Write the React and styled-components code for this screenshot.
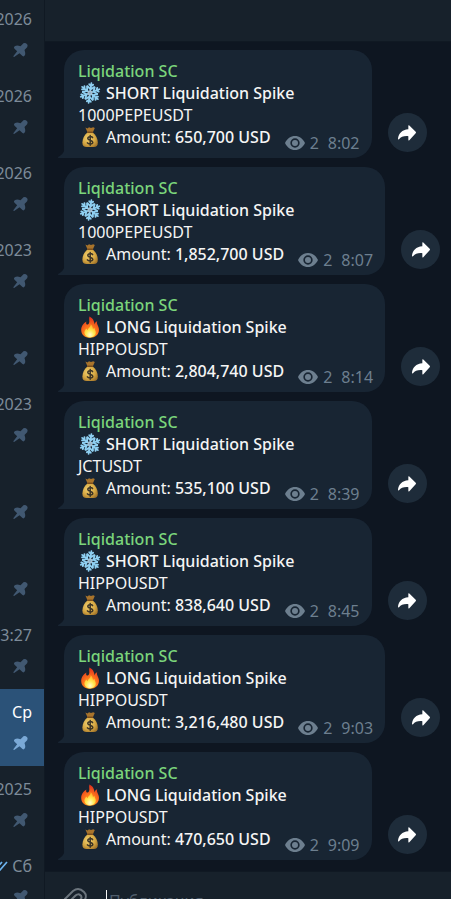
import React from "react";
import styled, { createGlobalStyle } from "styled-components";

const chats = [
  { id: 1, date: "2026" },
  { id: 2, date: "2026" },
  { id: 3, date: "2026" },
  { id: 4, date: "2023" },
  { id: 5, date: "" },
  { id: 6, date: "2023" },
  { id: 7, date: "" },
  { id: 8, date: "" },
  { id: 9, date: "3:27" },
  { id: 10, date: "Ср", active: true },
  { id: 11, date: "2025" },
  { id: 12, date: "Сб", read: true },
];

const messages = [
  { type: "SHORT", coin: "1000PEPEUSDT", amount: "650,700", time: "8:02" },
  { type: "SHORT", coin: "1000PEPEUSDT", amount: "1,852,700", time: "8:07" },
  { type: "LONG", coin: "HIPPOUSDT", amount: "2,804,740", time: "8:14" },
  { type: "SHORT", coin: "JCTUSDT", amount: "535,100", time: "8:39" },
  { type: "SHORT", coin: "HIPPOUSDT", amount: "838,640", time: "8:45" },
  { type: "LONG", coin: "HIPPOUSDT", amount: "3,216,480", time: "9:03" },
  { type: "LONG", coin: "HIPPOUSDT", amount: "470,650", time: "9:09" },
];

/// icons ///
const PinIcon = () => (
  <svg width="15" height="14" viewBox="0 0 44 42" fill="currentColor">
    <path d="M28 4Q30 0 35 0Q38 0 41 3Q44 6 43 9Q43 13 39 16L34 21Q38 32 35 37Q32 42 28 39L19 31L4 41Q0 43 1 39L12 25L4 17Q0 12 6 9Q12 6 22 10Z" />
  </svg>
);

const ChecksIcon = () => (
  <svg width="18" height="10" viewBox="0 0 18 10" fill="none">
    <path
      d="M1 5L5 9L12 1M8 7L10 9L17 1"
      stroke="#6cb4f0"
      strokeWidth="1.7"
    />
  </svg>
);

const EyeIcon = () => (
  <svg width="20" height="14" viewBox="0 0 60 42">
    <path
      fill="currentColor"
      fillRule="evenodd"
      d="M0 21C7 7 17 0 30 0S53 7 60 21C53 35 43 42 30 42S7 35 0 21ZM30 7A14 14 0 1 0 30 35A14 14 0 1 0 30 7ZM30 12A9 9 0 1 1 30 30A9 9 0 1 1 30 12Z"
    />
  </svg>
);

const ShareIcon = () => (
  <svg width="18" height="16" viewBox="0 0 54 47" fill="#fff">
    <path d="M31 2Q31 -1 34 1L53 20Q55 22 53 24L34 45Q31 47 31 44V33C17 32 9 35 3 42Q0 44 0 40C2 25 12 13 31 12Z" />
  </svg>
);

const ClipIcon = () => (
  <svg width="24" height="26" viewBox="0 0 24 26" fill="none">
    <path
      d="M9 20L17 12C19 10 19 8 17 7C16 6 14 6 12 8L5 15C2 18 2 21 4 23C6 25 9 25 12 22L20 14C23 11 24 7 21 4C18 1 14 0 10 3L2 11"
      stroke="#6c757d"
      strokeWidth="2"
      strokeLinecap="round"
    />
  </svg>
);

const SnowIcon = () => (
  <svg width="22" height="22" viewBox="0 0 22 22" fill="none">
    <defs>
      <g id="arm">
        <path d="M11 11V1M11 7.4L7.6 4.6M11 7.4L14.4 4.6M11 4.2L9 2.4M11 4.2L13 2.4" />
      </g>
    </defs>
    <g stroke="#8fd0f2" strokeWidth="1.8" strokeLinecap="round">
      {[0, 60, 120, 180, 240, 300].map((deg) => (
        <use key={deg} href="#arm" transform={`rotate(${deg + 8} 11 11)`} />
      ))}
    </g>
    <circle cx="11" cy="11" r="2.4" fill="#a9bfd0" />
    <circle cx="11" cy="11" r="1" fill="#7fb0d0" />
  </svg>
);

const FireIcon = () => (
  <svg width="22" height="22" viewBox="0 0 22 22">
    <defs>
      <radialGradient id="flame" cx="0.5" cy="0.85" r="0.8">
        <stop offset="0" stopColor="#ffb01f" />
        <stop offset="0.45" stopColor="#ff7a1c" />
        <stop offset="1" stopColor="#e0301e" />
      </radialGradient>
      <radialGradient id="core" cx="0.5" cy="0.8" r="0.7">
        <stop offset="0" stopColor="#fffbd0" />
        <stop offset="0.5" stopColor="#ffe850" />
        <stop offset="1" stopColor="#ffb52a" />
      </radialGradient>
    </defs>
    <path
      fill="url(#flame)"
      d="M10.4 0.4C9.6 3.2 11 5 10 7.2C9.4 8.6 8 9 7.4 8C7 7.2 7.2 6 7.4 5.4C4.6 7 2 10.4 2.2 14.2C2.4 18.8 6 21.8 11 21.8C16.2 21.8 20 18.6 20 13.8C20 11 18.6 9.6 18 7.4C17.8 6.6 18 5.8 18.2 5.2C16.6 5.8 15.8 7.2 15.6 8.4C15.2 5 14 2 10.4 0.4Z"
    />
    <path
      fill="url(#core)"
      d="M11.6 8.2C12 11 9 12 8.6 14.2C8 13.8 7.6 13.2 7.6 12.4C6 13.8 5.2 15.4 5.4 17C5.8 19.8 8 21.4 11 21.4C14.2 21.4 16.8 19.6 16.8 16.6C16.8 14.6 15.6 13.8 15.4 11.8C14.6 12.2 14.2 12.8 14 13.6C13.8 11.4 13.4 9.6 11.6 8.2Z"
    />
  </svg>
);

const BagIcon = () => (
  <svg width="22" height="22" viewBox="0 0 22 22">
    <defs>
      <radialGradient id="bag" cx="0.4" cy="0.4" r="0.7">
        <stop offset="0" stopColor="#f2d272" />
        <stop offset="0.6" stopColor="#d6a843" />
        <stop offset="1" stopColor="#a3752a" />
      </radialGradient>
    </defs>
    <path
      fill="#a8742c"
      d="M6.4 1.6L8.4 2.4L10 1.2L12 2L14.2 1.2L15.8 2L13.8 6.4H8.6Z"
    />
    <path
      fill="url(#bag)"
      d="M8.4 6.4H13.8C16.8 8.8 18.8 12.6 18.8 16.4C18.8 19.8 17.4 21 14.8 21H7.6C4.8 21 3.4 19.8 3.4 16.4C3.4 12.6 5.4 8.8 8.4 6.4Z"
    />
    <rect x="8" y="5.4" width="6.2" height="1.6" rx="0.8" fill="#7c4f1c" />
    <path
      fill="none"
      stroke="#3c3426"
      strokeWidth="1.5"
      strokeLinecap="round"
      d="M13.6 11.6C12.8 10.2 8.8 10.2 8.8 12.4C8.8 14.6 13.8 13.8 13.8 16.2C13.8 18.4 9.4 18.4 8.4 16.8M11.2 9.4V19.2"
    />
  </svg>
);

function Message({ type, coin, amount, time }) {
  return (
    <MessageRow>
      <Bubble>
        <Tail width="8" height="12" viewBox="0 0 8 12">
          <path d="M8 0C8 6 5 9 1 11Q0 12 2 12H8Z" fill="#182533" />
        </Tail>
        <Author>Liqidation SC</Author>
        <Line>
          <Emoji>{type === "SHORT" ? <SnowIcon /> : <FireIcon />}</Emoji>
          <b>{type} Liquidation Spike</b>
        </Line>
        <Line>{coin}</Line>
        <AmountRow>
          <Line>
            <Emoji>
              <BagIcon />
            </Emoji>
            <span>
              Amount: <b>{amount} USD</b>
            </span>
          </Line>
          <Meta>
            <EyeIcon />
            <Views>2</Views>
            <span>{time}</span>
          </Meta>
        </AmountRow>
      </Bubble>
      <ShareButton aria-label="Share">
        <ShareIcon />
      </ShareButton>
    </MessageRow>
  );
}

function App() {
  return (
    <Page>
      <GlobalStyle />
      <Sidebar>
        <ChatList>
          {chats.map((chat) => (
            <ChatItem key={chat.id} $active={chat.active}>
              <ChatDate>
                {chat.read && <ChecksIcon />}
                {chat.date}
              </ChatDate>
              <PinIcon />
            </ChatItem>
          ))}
        </ChatList>
      </Sidebar>
      <Chat>
        <Header />
        <MessageList>
          {messages.map((message) => (
            <Message key={message.time} {...message} />
          ))}
        </MessageList>
        <Composer>
          <AttachButton aria-label="Attach">
            <ClipIcon />
          </AttachButton>
          <Input placeholder="Публикация" aria-label="Публикация" />
        </Composer>
      </Chat>
    </Page>
  );
}

const GlobalStyle = createGlobalStyle`
  * {
    box-sizing: border-box;
  }
  body {
    margin: 0;
    background: #0e1621;
    font-family: "Noto Sans", "Open Sans", sans-serif;
    font-size: 16px;
    line-height: 22px;
  }
  b {
    font-weight: 500;
  }
  svg {
    display: block;
    flex-shrink: 0;
  }
`;
const Page = styled.div`
  display: flex;
  height: 100vh;
  overflow: hidden;
`;
const Sidebar = styled.aside`
  flex: 0 0 44px;
  overflow: hidden;
  background: #17212b;
`;
/* the list is scrolled a little past its first row */
const ChatList = styled.div`
  margin-top: -4px;
`;
const ChatItem = styled.div`
  display: flex;
  flex-direction: column;
  align-items: flex-end;
  gap: 13px;
  height: 77px;
  padding: 12px 16px 0 0;
  background: ${(props) => (props.$active ? "#2b5278" : "transparent")};
  color: ${(props) => (props.$active ? "#7ba9d6" : "#415871")};

  span {
    color: ${(props) => (props.$active ? "#fff" : "#7d8b99")};
  }
`;
const ChatDate = styled.span`
  display: flex;
  align-items: center;
  gap: 4px;
  height: 22px;
  margin-right: -4px;
`;
const Chat = styled.main`
  flex: 1;
  min-width: 0;
  border-left: 1px solid #101923;
`;
const Header = styled.header`
  height: 42px;
  background: #17212b;
  border-bottom: 1px solid #101923;
`;
const MessageList = styled.div`
  display: flex;
  flex-direction: column;
  gap: 9px;
  padding: 8px 19px 11px;
`;
const MessageRow = styled.div`
  display: flex;
  align-items: flex-end;
  gap: 16px;
`;
const Bubble = styled.div`
  position: relative;
  padding: 10px 12px 4px 14px;
  background: #182533;
  color: #f5f5f5;
  border-radius: 20px 20px 20px 0;
  white-space: nowrap;
`;
const Tail = styled.svg`
  position: absolute;
  left: -7px;
  bottom: 0;
`;
const Author = styled.div`
  color: #7bd57b;
  font-weight: 500;
`;
const Line = styled.div`
  display: flex;
  height: 22px;
`;
const Emoji = styled.span`
  flex: 0 0 28px;
  padding-left: 1px;
`;
const AmountRow = styled.div`
  display: flex;
  gap: 14px;
  height: 28px;
`;
const Meta = styled.div`
  display: flex;
  align-items: center;
  align-self: flex-end;
  height: 22px;
  color: #6d7f8f;
`;
const Views = styled.span`
  margin: 0 9px 0 5px;
`;
const ShareButton = styled.button`
  display: flex;
  align-items: center;
  justify-content: center;
  flex-shrink: 0;
  width: 39px;
  height: 39px;
  margin-bottom: 6px;
  padding: 0;
  border: none;
  border-radius: 50%;
  background: #1e2c3a;
`;
const Composer = styled.div`
  display: flex;
  align-items: center;
  gap: 19px;
  height: 58px;
  padding: 0 18px;
  background: #17212b;
  border-top: 1px solid #101923;
`;
const AttachButton = styled.button`
  padding: 0;
  border: none;
  background: none;
`;
const Input = styled.input`
  flex: 1;
  min-width: 0;
  height: 22px;
  padding: 0 2px;
  border: none;
  border-left: 1px solid #f5f5f5;
  outline: none;
  background: none;
  color: #f5f5f5;
  font: inherit;

  &::placeholder {
    color: #4f5d6b;
  }
`;

export default App;
